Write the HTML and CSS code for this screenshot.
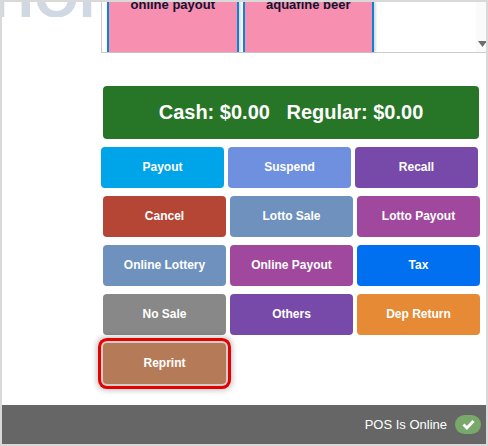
FILE: index.html
```html
<!DOCTYPE html>
<html lang="en">
<head>
  <meta charset="UTF-8" />
  <title>POS Register</title>
  <link rel="stylesheet" href="styles.css">
</head>
<body>
  <div class="frame">
    <div class="main">
      <div class="top">
        <div class="watermark"><span>HOI</span></div>
        <div class="items">
          <div class="item">online payout</div>
          <div class="item">aquafine beer</div>
          <div class="scroll-track">
            <svg width="9" height="6" viewBox="0 0 9 6"><path d="M0 0H9L4.5 6Z" fill="#6e6e6e"/></svg>
          </div>
        </div>
      </div>

      <div class="totals">Cash: $0.00 &nbsp; Regular: $0.00</div>

      <div class="row row-first">
        <button class="btn blue">Payout</button>
        <button class="btn periwinkle">Suspend</button>
        <button class="btn violet">Recall</button>
      </div>
      <div class="row">
        <button class="btn red">Cancel</button>
        <button class="btn steel">Lotto Sale</button>
        <button class="btn purple">Lotto Payout</button>
      </div>
      <div class="row">
        <button class="btn steel">Online Lottery</button>
        <button class="btn purple">Online Payout</button>
        <button class="btn azure">Tax</button>
      </div>
      <div class="row">
        <button class="btn gray">No Sale</button>
        <button class="btn violet">Others</button>
        <button class="btn orange">Dep Return</button>
      </div>
      <div class="row">
        <button class="btn brown focused">Reprint</button>
      </div>
    </div>

    <div class="status">
      <span>POS Is Online</span>
      <span class="online-pill">
        <svg width="13" height="11" viewBox="0 0 13 11"><path d="M1.5 5.6L4.9 9L11.5 2" fill="none" stroke="#fff" stroke-width="2.8"/></svg>
      </span>
    </div>
  </div>
</body>
</html>
```

FILE: styles.css
```css
* {
  box-sizing: border-box;
  font-family: "Liberation Sans", Arial, sans-serif;
}

html, body {
  margin: 0;
  padding: 0;
}

.frame {
  width: 488px;
  height: 446px;
  display: flex;
  flex-direction: column;
  border: 2px solid #d9d9d9;
  background: white;
  overflow: hidden;
}

.main {
  flex: 1;
  padding-left: 101px;
  padding-right: 6px;
}

.top {
  display: flex;
  height: 51px;
  margin-left: -101px;
  margin-bottom: 33px;
}

.watermark {
  width: 99px;
  height: 15px;
  overflow: hidden;
  flex: none;
}

.watermark span {
  display: block;
  margin-top: -37px;
  margin-left: -10px;
  font-size: 58px;
  line-height: 64px;
  font-weight: bold;
  color: #d0d9e3;
  white-space: nowrap;
}

.items {
  flex: 1;
  display: flex;
  gap: 4px;
  margin-right: -6px;
  padding-left: 5px;
  border-left: 1px solid #ccc;
  border-bottom: 1px solid #ccc;
}

.item {
  width: 131.5px;
  height: 50px;
  background: #f78fb0;
  border-left: 2px solid #0a84d6;
  border-right: 2px solid #0a84d6;
  box-shadow: 2px 0 2px rgba(0,0,0,0.15);
  text-align: center;
  font-size: 13px;
  font-weight: bold;
  line-height: 6px;
  color: #14122e;
}

.scroll-track {
  width: 10px;
  margin-left: auto;
  padding-top: 39px;
  background: #fafafa;
  overflow: hidden;
}

.scroll-track svg {
  display: block;
  margin-left: 2px;
}

.totals {
  width: 376px;
  height: 53px;
  margin-bottom: 8px;
  background: #277526;
  border-radius: 4px;
  color: white;
  font-size: 20px;
  font-weight: bold;
  line-height: 53px;
  text-align: center;
}

.row {
  display: flex;
  gap: 4px;
  margin-bottom: 8px;
}

.row-first {
  margin-left: -2px;
}

.btn {
  width: 123px;
  height: 41px;
  padding: 0 0 2px;
  border: none;
  border-radius: 4px;
  color: white;
  font-size: 12px;
  font-weight: bold;
  cursor: pointer;
}

.focused {
  box-shadow: 0 0 0 2px #d2cdc9, 0 0 0 5px #e60000, 0 0 5px 7px rgba(0,0,0,0.2);
}

.blue { background: #00a4e8; }
.periwinkle { background: #6f8fdf; }
.violet { background: #7749a8; }
.red { background: #b54534; }
.steel { background: #6e92bd; }
.purple { background: #a0489e; }
.azure { background: #0070f0; }
.gray { background: #888888; }
.orange { background: #e68a35; }
.brown { background: #b57b58; }

.status {
  height: 39px;
  flex: none;
  display: flex;
  align-items: center;
  justify-content: flex-end;
  gap: 8px;
  padding-right: 5px;
  background: #666666;
  color: white;
  font-size: 13px;
}

.online-pill {
  width: 26px;
  height: 19px;
  display: flex;
  align-items: center;
  justify-content: center;
  border-radius: 10px;
  background: #78a96a;
}
```
